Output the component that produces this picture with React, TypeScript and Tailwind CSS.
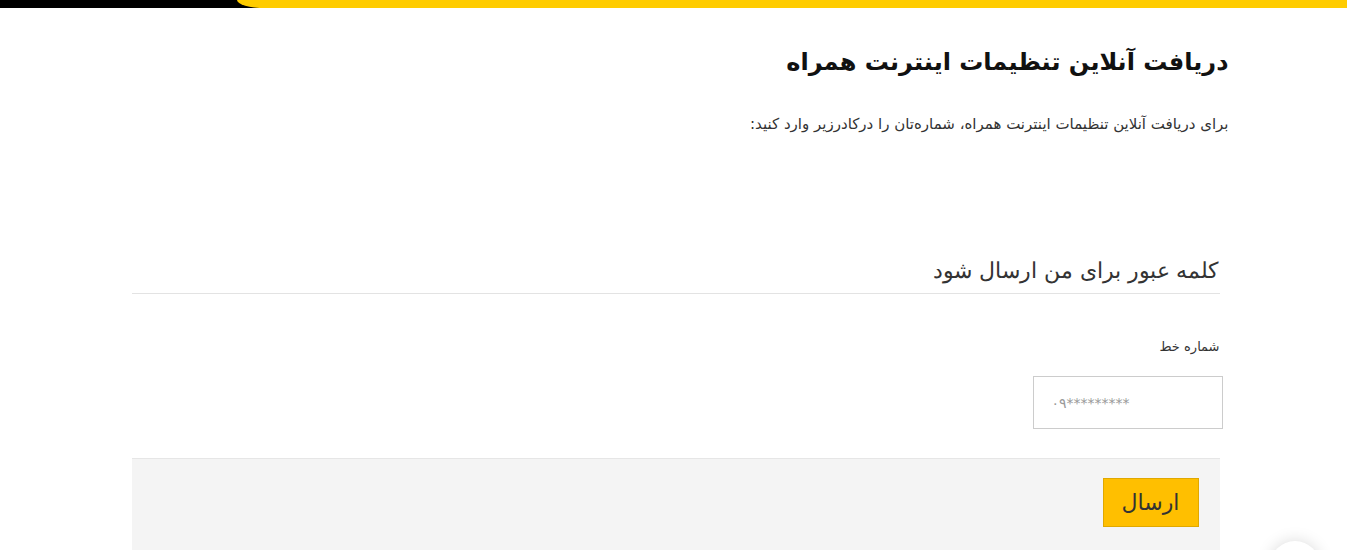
import { useState } from "react";

const fa = { fontFamily: '"DejaVu Sans", "Noto Sans", sans-serif' };

const App = () => {
  const [phone, setPhone] = useState("");

  return (
    <div dir="rtl" className="relative min-h-[550px] bg-white text-[#222]" style={fa}>
      {/* top bar */}
      <div dir="ltr" className="h-[8px] bg-black">
        <div className="ml-[237px] h-full rounded-bl-[28px_8px] bg-[#ffcc00]" />
      </div>

      <div className="mx-auto w-[1110px]">
        <h1 className="mt-[34px] text-[24px] font-bold leading-[40px] text-[#111]">
          دریافت آنلاین تنظیمات اینترنت همراه
        </h1>
        <p className="mt-[30px] text-[15px] leading-[24px] text-[#333]">
          برای دریافت آنلاین تنظیمات اینترنت همراه، شماره‌تان را درکادرزیر وارد کنید:
        </p>

        <div className="mr-[9px] ml-[13px] mt-[117px]">
          <h2 className="border-b border-[#e3e3e3] pr-[1px] pb-[4px] text-[22px] font-light leading-[36px] text-[#333]">
            کلمه عبور برای من ارسال شود
          </h2>

          <div className="mt-[43px] flex flex-col items-start">
            <label className="text-[13px] leading-[20px] text-[#333]">شماره خط</label>
            <input
              dir="ltr"
              value={phone}
              onChange={(e) => setPhone(e.target.value)}
              placeholder="۰۹*********"
              className="-mr-[3px] mt-[19px] h-[53px] w-[190px] border border-[#cccccc] bg-white pl-[18px] text-[14px] text-[#555] outline-none placeholder:text-[#999]"
            />
          </div>

          <div className="mt-[29px] h-[120px] border-t border-[#e6e6e6] bg-[#f4f4f4] pt-[19px] pr-[21px]">
            <button className="h-[49px] w-[96px] border border-[#e0a800] bg-[#ffbf00] text-[22px] text-[#333]">
              ارسال
            </button>
          </div>
        </div>
      </div>

      {/* floating help button */}
      <div className="absolute left-[1270px] top-[541px] h-[50px] w-[50px] rounded-full bg-white shadow-[0_0_16px_rgba(0,0,0,0.15)]" />
    </div>
  );
};

export default App;
